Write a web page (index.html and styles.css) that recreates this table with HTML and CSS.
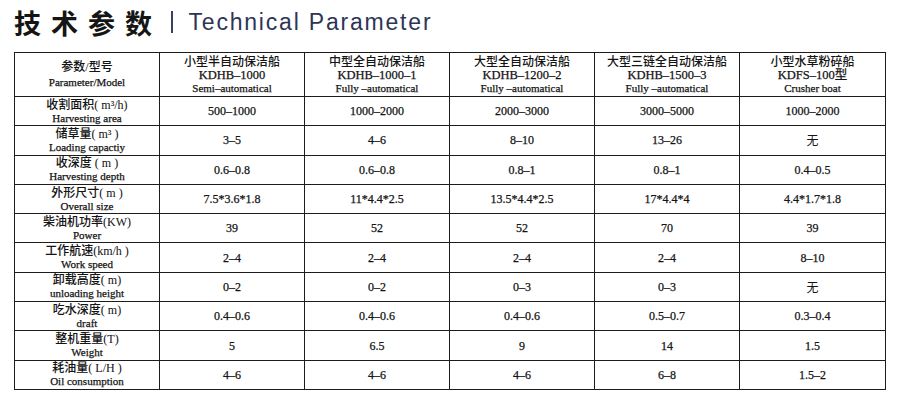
FILE: index.html
```html
<!DOCTYPE html>
<html lang="zh-CN">
<head>
<meta charset="utf-8">
<title>技术参数 | Technical Parameter</title>
<link rel="stylesheet" href="styles.css">
</head>
<body>
<div class="page">
  <h1 class="title"><span class="title-zh">技术参数</span><span class="title-bar"></span><span class="title-en">Technical Parameter</span></h1>
  <table class="spec">
    <colgroup>
      <col class="c"><col class="c"><col class="c"><col class="c"><col class="c"><col class="c-last">
    </colgroup>
    <thead>
      <tr>
        <th class="lab"><div class="zh">参数/型号</div><div class="en">Parameter/Model</div></th>
        <th><div class="hz">小型半自动保洁船</div><div class="hm">KDHB–1000</div><div class="he">Semi–automatical</div></th>
        <th><div class="hz">中型全自动保洁船</div><div class="hm">KDHB–1000–1</div><div class="he">Fully –automatical</div></th>
        <th><div class="hz">大型全自动保洁船</div><div class="hm">KDHB–1200–2</div><div class="he">Fully –automatical</div></th>
        <th><div class="hz">大型三链全自动保洁船</div><div class="hm">KDHB–1500–3</div><div class="he">Fully –automatical</div></th>
        <th><div class="hz">小型水草粉碎船</div><div class="hm">KDFS–100型</div><div class="he">Crusher boat</div></th>
      </tr>
    </thead>
    <tbody>
      <tr><td class="lab"><div class="zh">收割面积( m³/h)</div><div class="en">Harvesting area</div></td><td>500–1000</td><td>1000–2000</td><td>2000–3000</td><td>3000–5000</td><td>1000–2000</td></tr>
      <tr><td class="lab"><div class="zh">储草量( m³ )</div><div class="en">Loading capactiy</div></td><td>3–5</td><td>4–6</td><td>8–10</td><td>13–26</td><td class="zhv">无</td></tr>
      <tr><td class="lab"><div class="zh">收深度 ( m )</div><div class="en">Harvesting depth</div></td><td>0.6–0.8</td><td>0.6–0.8</td><td>0.8–1</td><td>0.8–1</td><td>0.4–0.5</td></tr>
      <tr><td class="lab"><div class="zh">外形尺寸( m )</div><div class="en">Overall size</div></td><td>7.5*3.6*1.8</td><td>11*4.4*2.5</td><td>13.5*4.4*2.5</td><td>17*4.4*4</td><td>4.4*1.7*1.8</td></tr>
      <tr><td class="lab"><div class="zh">柴油机功率(KW)</div><div class="en">Power</div></td><td>39</td><td>52</td><td>52</td><td>70</td><td>39</td></tr>
      <tr><td class="lab"><div class="zh">工作航速(km/h )</div><div class="en">Work speed</div></td><td>2–4</td><td>2–4</td><td>2–4</td><td>2–4</td><td>8–10</td></tr>
      <tr><td class="lab"><div class="zh">卸载高度( m)</div><div class="en">unloading height</div></td><td>0–2</td><td>0–2</td><td>0–3</td><td>0–3</td><td class="zhv">无</td></tr>
      <tr><td class="lab"><div class="zh">吃水深度( m)</div><div class="en">draft</div></td><td>0.4–0.6</td><td>0.4–0.6</td><td>0.4–0.6</td><td>0.5–0.7</td><td>0.3–0.4</td></tr>
      <tr><td class="lab"><div class="zh">整机重量(T)</div><div class="en">Weight</div></td><td>5</td><td>6.5</td><td>9</td><td>14</td><td>1.5</td></tr>
      <tr><td class="lab"><div class="zh">耗油量( L/H )</div><div class="en">Oil consumption</div></td><td>4–6</td><td>4–6</td><td>4–6</td><td>6–8</td><td>1.5–2</td></tr>
    </tbody>
  </table>
</div>
</body>
</html>
```
FILE: styles.css
```css
html, body {
  margin: 0;
  padding: 0;
  background: #ffffff;
}

.page {
  padding: 0 0 0 14px;
  font-family: "Liberation Serif", "Noto Sans CJK SC", serif;
  color: #141414;
}

.title {
  margin: 0;
  height: 52px;
  display: flex;
  align-items: center;
  font-weight: normal;
  padding-bottom: 8px;
  box-sizing: border-box;
}

.title-zh {
  font-family: "Noto Sans CJK SC", sans-serif;
  font-weight: 700;
  font-size: 27px;
  letter-spacing: 10px;
  color: #151515;
  line-height: 1;
}

.title-bar {
  width: 1.5px;
  height: 22px;
  background: #3a4160;
  margin: 0 16px 0 9px;
}

.title-en {
  font-family: "Liberation Sans", sans-serif;
  font-size: 23px;
  letter-spacing: 1.8px;
  color: #2d3557;
  line-height: 1;
}

.spec {
  width: 871px;
  table-layout: fixed;
  border-collapse: collapse;
  border: 1.5px solid #333;
  -webkit-text-stroke: 0.25px #141414;
}

.c { width: 145px; }
.c-last { width: 146px; }

.spec th,
.spec td {
  border: 1px solid #1c1c1c;
  padding: 0;
  text-align: center;
  vertical-align: middle;
  font-weight: normal;
}

.spec thead th {
  height: 43px;
}

.spec tbody td {
  height: 28.3px;
  font-size: 12px;
  line-height: 14px;
}

.hz {
  font-family: "Noto Sans CJK SC", sans-serif;
  font-weight: 500;
  font-size: 12px;
  line-height: 14px;
  -webkit-text-stroke: 0;
}

.hm {
  font-size: 12.5px;
  line-height: 14px;
}

.he {
  font-size: 11px;
  line-height: 13px;
}

.lab .zh {
  font-weight: 500;
  font-size: 12px;
  line-height: 13px;
  -webkit-text-stroke: 0.05px #141414;
}

.lab .en {
  font-size: 11px;
  line-height: 12px;
}

thead .lab .zh {
  line-height: 15px;
}

thead .lab .en {
  line-height: 15px;
}

.zhv {
  font-family: "Noto Sans CJK SC", sans-serif;
  font-weight: 500;
  -webkit-text-stroke: 0;
}
.spec tbody td.zhv {
  font-size: 12px;
}
```
